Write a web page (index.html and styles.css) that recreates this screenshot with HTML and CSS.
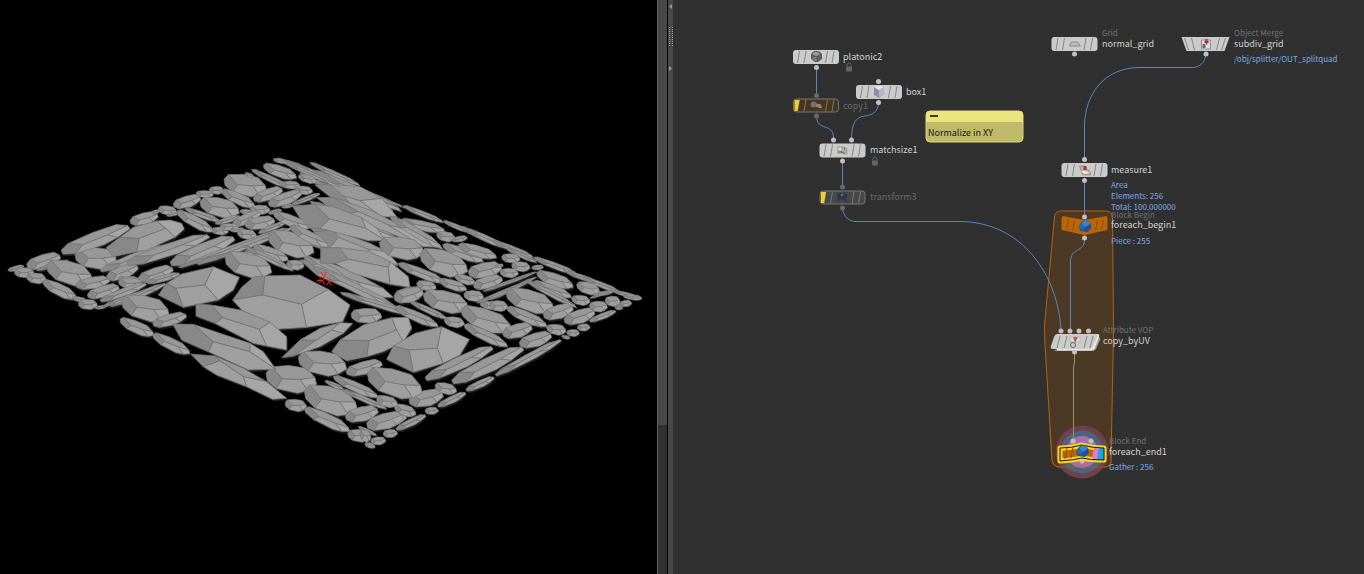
FILE: index.html
```html
<!DOCTYPE html>
<html lang="en">
<head>
<meta charset="utf-8">
<title>Scene and network editor</title>
<link rel="stylesheet" href="styles.css">
</head>
<body>
<main class="workspace">
  <section class="viewport" aria-label="Scene view">
    <svg class="scene" viewBox="0 0 657 574" preserveAspectRatio="xMinYMin meet">
      <g id="shadows"></g>
      <g id="stones"></g>
      <g class="axis">
        <path d="M317 280.500h6M320 277.500v6M323 281l1 3h1"/>
        <text x="321" y="278">y</text>
        <text x="326" y="285">x</text>
      </g>
    </svg>
  </section>
  <div class="scrollbar"><div class="thumb"></div></div>
  <div class="splitter">
    <svg viewBox="0 0 5 80" width="5" height="80">
      <path fill="#999" d="M4 4v5L1 6.500zM1 66v5l3-2.500z"/>
      <path stroke="#999" stroke-width="1" stroke-dasharray="1 1" d="M1.500 27v20M4.500 27v20"/>
    </svg>
  </div>
  <section class="network" aria-label="Network editor">
    <svg class="graph" viewBox="673 0 691 574" preserveAspectRatio="xMinYMin meet">
      <defs>
        <g id="slashes"><path d="M-18.500 6l2-12M-12 6l2-12M9.500 6l2-12M16 6l2-12"/></g>
        <g id="plate"><rect x="-23" y="-7" width="46" height="14" rx="3" fill="#cbcbcb"/><use href="#slashes" stroke="#858585"/></g>
        <g id="lock"><rect x="-3" y="-1" width="6" height="5" rx="1" fill="#5b6a68"/><path d="M-2-1v-1.500a2 2 0 0 1 4 0v1.500" fill="none" stroke="#5b6a68"/></g>
        <g id="blob"><path fill="#17549b" d="M-6 1l3-5 4-2 5 3 1 5-4 4-7-1z"/><path fill="#3d83d2" d="M-3-3l4-3 5 3-3 3-3 1z"/><path fill="#2767b3" d="M-6 1l3-4 3 4-1 4z"/></g>
      </defs>

      <path class="region" d="M1061 211H1105Q1112 211 1112.500 217L1113.500 330L1111 461Q1111 467 1104 467H1060Q1053 467 1052 460L1045 345L1044.500 325L1054.500 217Q1055 211 1061 211Z"/>
      <g>
        <circle cx="1082" cy="452" r="26.500" fill="#70404c"/>
        <circle cx="1082" cy="452" r="21.500" fill="#50637c"/>
        <circle cx="1082" cy="452" r="16" fill="#a66fad"/>
      </g>
      <path class="region edge" d="M1111.500 430L1111 461Q1111 467 1104 467H1060Q1053 467 1052 460L1050 430"/>

      <g class="wires">
        <path d="M816.500 68V95"/>
        <path d="M816.500 116C816.500 132 833.500 122 833.500 138"/>
        <path d="M878.500 103C878 112 872 115 865 116C855 117 852 124 851.500 138"/>
        <path d="M842.500 161V187"/>
        <path d="M842.500 209C844 217 849 221.500 856 221.500H960C1023 222 1058 276 1061 330"/>
        <path d="M1206 54C1205 62 1200 67.500 1193 67.500H1139C1104 68 1085 94 1084.500 126V159"/>
        <path d="M1084.500 181V216"/>
        <path d="M1084.500 239C1084.500 254 1070.500 246 1070.500 262V330"/>
        <path class="olive" d="M1074.500 352V362L1073.500 367V440"/>
      </g>

      <g class="ports">
        <circle cx="816.500" cy="67.500" r="2.500"/><circle cx="878.500" cy="81.500" r="2.500"/><circle cx="878.500" cy="102.500" r="2.500"/>
        <circle cx="833.500" cy="140" r="2.500"/><circle cx="851.500" cy="140" r="2.500"/><circle cx="842.500" cy="161" r="2.500"/>
        <circle cx="1074.500" cy="54" r="2.500"/><circle cx="1206" cy="54" r="2.500"/>
        <circle cx="1084.500" cy="159.500" r="2.500"/><circle cx="1084.500" cy="180.500" r="2.500"/><circle cx="1084.500" cy="217" r="2.500"/><circle cx="1084.500" cy="238" r="2.500"/>
        <circle cx="1061" cy="331" r="2.500"/><circle cx="1070" cy="331" r="2.500"/><circle cx="1079" cy="331" r="2.500"/><circle cx="1088.500" cy="331" r="2.500"/><circle cx="1074.500" cy="352" r="2.500"/>
        <circle cx="1073" cy="441" r="2.500"/><circle cx="1091" cy="441" r="2.500"/><circle cx="1082" cy="461" r="2.500"/>
        <g class="off"><circle cx="816.500" cy="95.500" r="2.500"/><circle cx="816.500" cy="116" r="2.500"/><circle cx="842.500" cy="187" r="2.500"/><circle cx="842.500" cy="208" r="2.500"/></g>
      </g>

      <g transform="translate(816 57)"><use href="#plate"/><path fill="#5c5c5c" d="M-5-3l3-3h5l3 3v5l-4 3h-3l-4-3z"/><path fill="#999" d="M-3-4l2-1h3l2 2-3 2-4-1z"/><path fill="#7a7a7a" d="M-3 0l3 0 1 3-2 1-3-2z"/></g>
      <g transform="translate(879 92)"><use href="#plate"/><path fill="#8793a3" d="M-5-5l5 3 5-3v7l-5 4-5-3z"/><path fill="#e4e8ee" d="M-5-5l5-1 5 1-5 3z"/><path fill="#aeb8c8" d="M0-2l5-3v7l-5 4z"/></g>
      <g transform="translate(816 105.500)"><rect x="-22.500" y="-6.500" width="45" height="13" rx="3" fill="#49341f" stroke="#777"/><use href="#slashes" stroke="#777"/><path fill="#ecd02c" d="M-21.500-5.500h5l-2 11h-3z"/><circle cx="-2.500" cy="-1" r="3" fill="#74706a"/><path fill="#8a857b" d="M0-2l5 1 1 3-2 1-4-2z"/></g>
      <g transform="translate(842.500 150.500)"><use href="#plate"/><rect x="-5" y="-4" width="6" height="7" fill="#88968a"/><path fill="#e1e8df" d="M-4-3h3v3h-3z"/><path fill="#a2b29a" d="M0-3h5v7h-4l-2-4z"/><path stroke="#50713f" d="M-2 1l4 2M2-3v2"/></g>
      <g transform="translate(842.500 197.500)"><rect x="-22.500" y="-6.500" width="45" height="13" rx="3" fill="#474747" stroke="#777"/><use href="#slashes" stroke="#777"/><path fill="#ecd02c" d="M-21.500-5.500h5l-2 11h-3z"/><path fill="#26384c" d="M-5-3l3-2 3 2 3-1 1 3-2 2 2 3-4-1-2-2-4 3z"/><path fill="#5d7185" d="M-2-3l2-1 1 2-2 1z"/></g>
      <use href="#lock" x="849" y="67.500"/><use href="#lock" x="875" y="161.500"/>
      <g transform="translate(1074.500 44)"><use href="#plate"/><path fill="#b8bdc3" stroke="#858c94" d="M-5 2l2-4h6l3 4z"/></g>
      <g transform="translate(1205.500 44)"><path fill="#cbcbcb" d="M-24-7H24L19 7H-19z"/><path stroke="#858585" d="M-17 6l-4-12M-11 6l-3-12M11 6l3-12M16 6l4-12"/><path fill="#d8dde0" stroke="#88939b" d="M-4-4h9v9h-9z"/><path fill="#5d6f7b" d="M-3 0h3v4h-3z"/><path fill="#ca2222" d="M0-5h2v2h1v2h-1l-1 2-1-2h-1v-2h1z"/></g>
      <g transform="translate(1084.500 170)"><use href="#plate"/><path fill="#b9b09b" stroke="#777062" stroke-width=".5" d="M-5-4h4l7 6v3h-8z"/><path fill="#bf2534" d="M-1-4h3v4h-3z"/><path fill="#f1ead6" d="M-4 1l5 0 4 2-5 1z"/></g>
      <g transform="translate(1084.500 225)"><path fill="#bd6500" d="M-22-9L0-5 22-9 23-7V5L0 10-23 5v-12z"/><path stroke="#805021" d="M-18 5l2-11M-12 6l2-11M11 6l2-11M17 5l2-11"/><use href="#blob" y="1"/></g>
      <g transform="translate(1075 342)"><path fill="#9c9c9c" d="M-17-5H23Q26-5 25-2L21 7Q20 9 17 9H-18z"/><path fill="#e5e5e5" d="M22-8Q25-8 24-5L20 6Q19 8.500 16 8.500H-21z"/><path fill="#cbcbcb" d="M-18-8H20Q23-8 22-5L18 4Q17 7 14 7H-22Q-25 7-24 4L-21-5Q-20-8-18-8z"/><path stroke="#858585" d="M-18 6l3-12M-11 6l3-12M9 6l3-12M15 6l3-12"/><path fill="#ddd" stroke="#999" stroke-width=".5" d="M-5-5H5v5H-5z"/><path fill="#b95c46" d="M-2-5h5L0 1z"/><circle cx="-2" cy="3" r="2.500" fill="none" stroke="#696969"/></g>
      <g transform="translate(1082 453)"><path fill="#bd6500" stroke="#ffd51c" stroke-width="5" stroke-linejoin="round" d="M-22-5Q-10-5 0-8 10-5 22-5V7Q8 7 0 5-8 7-22 8z"/><path fill="#e07bd0" d="M12-6l5 1-2 12-5-1z"/><path fill="#12a8e8" d="M17-5h5V7h-7z"/><path fill="none" stroke="#151515" stroke-width="1" d="M-22-5Q-10-5 0-8 10-5 22-5V7Q8 7 0 5-8 7-22 8z"/><path stroke="#805021" d="M-17 6l2-11M-11 5l2-11"/><use href="#blob" y="-2"/></g>

      <g class="note">
        <rect x="926" y="111" width="97" height="31" rx="4" fill="#bfb96a" stroke="#ded770"/>
        <path fill="#ebe47c" d="M926 122v-7q0-4 4-4h89q4 0 4 4v7z"/>
        <rect x="930" y="115" width="8" height="2" fill="#3b3920"/>
        <text x="928" y="136">Normalize in XY</text>
      </g>

      <g class="name">
        <text x="843" y="60">platonic2</text><text x="906" y="95">box1</text>
        <text class="dim" x="843" y="109">copy1</text><text x="870" y="153">matchsize1</text><text class="dim" x="870" y="200">transform3</text>
        <text x="1102" y="47">normal_grid</text><text x="1234" y="47">subdiv_grid</text>
        <text x="1111" y="173">measure1</text><text x="1111" y="228">foreach_begin1</text><text x="1103" y="344">copy_byUV</text><text x="1109" y="455">foreach_end1</text>
      </g>
      <g class="kind">
        <text x="1102" y="36">Grid</text><text x="1234" y="36">Object Merge</text><text x="1111" y="218">Block Begin</text><text x="1103" y="333">Attribute VOP</text><text x="1109" y="444">Block End</text>
      </g>
      <g class="info">
        <text x="1234" y="62">/obj/splitter/OUT_splitquad</text><text x="1111" y="188">Area</text><text x="1111" y="199">Elements: 256</text><text x="1111" y="210">Total: 100.000000</text><text x="1111" y="244">Piece : 255</text><text x="1109" y="470">Gather : 256</text>
      </g>
    </svg>
  </section>
</main>
<script src="stones.js"></script>
</body>
</html>
```
FILE: styles.css
```css
body { margin: 0; background: #303030; font-family: "Noto Sans CJK SC", "Noto Sans", sans-serif; }
.workspace { display: flex; height: 100vh; overflow: hidden; background: #000; }
.viewport { flex: 657 1 0; min-width: 0; background: #000; }
.scene { display: block; width: 100%; }
.scrollbar { flex: none; box-sizing: border-box; width: 10px; background: #303030; border-left: 1px solid #606060; }
.thumb { height: 74%; background: #484848; }
.splitter { flex: none; width: 5px; margin-left: 1px; background: #484848; }
.splitter svg { display: block; }
.network { flex: 691 1 0; min-width: 0; background: #303030; }
.graph { display: block; width: 100%; }
.axis path { fill: none; stroke: #ff1c1c; }
.axis text { font-size: 11px; fill: #ff1c1c; }
.facet { stroke: #757575; stroke-linejoin: round; }
.under { fill: #1b1b1b; }
.region { fill: #4b3926; stroke: #b96107; }
.region.edge { fill: none; stroke-opacity: .6; }
.wires path { fill: none; stroke: #5686c4; }
.wires .olive { stroke: #8b9b5c; }
.ports circle { fill: #c0c0c0; }
.ports .off circle { fill: #686868; }
.name { font-size: 9px; fill: #d0d0d0; }
.name .dim { fill: #686868; }
.kind { font-size: 8px; fill: #707070; }
.info { font-size: 8px; fill: #7caae8; }
.note text { font-size: 9px; fill: #17170f; }
```
FILE: stones.js
```js
// Stones are measured on a grid of thirds of a pixel, in patches with an origin of their own.
// Short rows: left x, left y, right x, right y, thickness.
const patches = [
  { x: 310, y: 160, rows: `
-95 -4 285 142 12;-70 4 250 150 20;10 35 275 150 26;0 10 150 75 16;0 60 250 170 22;40 130 400 262 30;0 130 270 240 30;
-10 250 265 313 20;0 205 250 300 26`,
    large: [
      ['15,75 60,73 150,80 215,115 262,172 215,170 130,140 60,110', '100,108', '150,122', [1, 3, 5, 6]],
      ['20,113 70,112 180,150 300,210 395,262 340,260 230,215 90,165', '145,155', '235,195', [1, 3, 5, 7]],
      ['10,215 70,210 180,250 230,275 265,313 200,308 120,290 60,262', '85,232', '175,268', [1, 3, 5, 7]],
      ['-30,300 30,297 130,335 220,385 250,412 190,412 90,375 20,345', '40,325', '140,365', [1, 3, 5, 7]]] },
  { x: 200, y: 150, rows: `
230 28 300 50 10;240 32 420 110 14;300 70 350 95 12;
310 322 440 385 26`,
    large: [
      ['277,168 345,163 400,170 485,203 530,235 557,272 505,272 360,235 325,235 300,205', '388,207', '498,235', [1, 3, 5, 7]]] },
  { x: 320, y: 150, rows: `
-20 355 235 475 28;60 430 300 500 18;
250 170 370 215 16;370 215 450 245 14;420 232 540 285 16;440 240 560 292 18;520 275 640 320 16;560 298 650 335 14;
640 325 770 370 18;740 368 830 395 14;790 385 900 425 16;880 425 950 440 12;
240 215 375 240 28;210 205 365 290 30;350 258 405 262 28;395 272 442 262 16;
178 290 312 300 62;300 325 443 352 72;368 290 490 330 32;415 290 530 318 32;
445 372 545 350 44;235 345 375 395 28;290 405 348 410 28;222 445 310 425 44;
358 395 440 415 28;405 383 465 395 26;460 410 548 385 36;432 438 490 438 28;
545 325 600 325 26;575 350 630 350 28;540 370 595 368 26;635 355 670 350 14;525 350 550 345 10;
510 450 650 380 12;470 460 610 400 12;490 425 650 365 10;480 465 560 470 24;650 375 760 405 38;640 400 755 438 28;620 395 770 470 18;
775 410 838 418 32;820 435 880 425 12;810 470 860 468 28;860 455 900 455 28;910 440 965 443 14;890 470 930 455 14`,
    large: [
      ['2,293 58,293 150,305 210,335 265,380 270,412 210,403 100,370 45,340 2,340', '85,328', '205,352', [1, 3, 6, 8]]] },
  { x: 0, y: 150, rows: `
820 30 860 36 12;24 362 72 348 14;43 370 102 366 28;80 385 138 385 30;80 350 182 318 40;110 362 205 330 12;
140 358 277 380 66;225 325 350 325 60;128 400 230 440 36;228 410 330 388 34;215 445 262 452 14;235 465 292 462 28;
262 440 358 410 34;285 475 320 468 10;183 310 390 228 46;390 218 475 195 34;455 188 480 182 10;475 180 530 183 26;
500 198 545 185 10;520 168 602 143 34;588 133 640 132 20;628 122 672 120 22;672 100 800 112 60;600 165 718 180 54;
665 128 765 165 34;735 72 762 80 12;755 62 870 112 18;790 52 890 78 34;845 105 900 105 22;895 82 950 92 22;
885 120 938 122 24;760 150 848 118 34;805 165 905 128 36;875 165 960 130 14;555 178 660 212 18;530 190 640 240 34;
645 222 720 198 16;720 185 755 186 14;750 180 810 178 26;805 190 845 180 12;845 172 880 165 10;698 225 782 188 32;
735 228 825 210 36;635 243 685 243 22;660 232 715 230 20;690 242 735 238 12;712 252 770 255 28;775 250 860 215 16;
820 195 925 230 34;300 365 500 285 28;320 385 415 350 38;380 345 630 255 38;510 345 705 262 46;535 355 860 232 16;
590 345 880 232 20;415 390 520 355 38;355 385 415 385 12;355 400 430 400 30;440 400 540 370 18;300 455 440 400 24;
330 470 500 400 18;310 470 430 425 14;675 335 815 355 70;805 270 942 295 70;760 295 865 325 34;735 305 770 312 12;
730 290 880 360 18;860 345 912 345 28;870 235 985 285 34`,
    large: [
      ['318,293 360,262 400,232 470,213 510,210 545,220 553,237 525,262 440,300 410,305 340,320', '418,265', '498,235', [1, 3, 7, 9]],
      ['475,435 500,400 545,372 640,350 718,382 700,420 655,450 550,472', '528,415', '615,405', [1, 3, 6, 7]],
      ['698,450 725,412 762,380 795,378 900,375 985,418 1050,465 1028,515 920,532 830,538 725,480', '788,435', '905,463', [3, 5, 8, 0]]] },
  { x: 120, y: 290, rows: `
5 45 148 65 70;0 95 102 130 36;98 105 200 75 34;98 140 210 185 36;438 265 590 270 76;495 345 560 347 34;
553 318 712 345 78;553 362 690 418 38;535 215 680 225 68;678 250 787 218 38;693 80 785 75 42;
640 265 775 318 30;615 275 670 295 14;665 300 800 355 16;770 335 832 337 30;676 385 775 360 42;
683 437 752 437 36;735 463 765 468 14;755 455 797 450 20;790 435 832 428 20;715 412 770 435 12;742 408 860 378 40`,
    large: [
      ['228,42 275,45 362,60 450,97 500,140 500,180 440,168 400,160 285,100 228,78', '308,83', '418,118', [1, 3, 6, 8]],
      ['158,102 220,103 390,160 430,185 468,238 385,240 265,185 185,150', '280,155', '390,185', [1, 2, 4, 6]],
      ['212,192 285,198 370,235 440,275 500,325 458,328 380,290 290,255 250,230', '300,212', '370,260', [1, 3, 6, 8]],
      ['485,203 540,150 600,115 660,98 698,100 670,130 600,170 520,198', '590,150', '635,120', [1, 3, 5, 7]],
      ['635,185 660,150 730,105 815,83 865,82 875,115 850,155 790,185 740,200 680,212', '748,152', '830,120', [1, 3, 6, 8]]] },
  { x: 360, y: 270, rows: `
105 115 235 165 30;150 97 262 145 18;172 45 228 50 26;103 88 190 65 40;190 85 325 105 60;312 78 370 78 30;
195 330 400 230 40;275 340 492 232 46;405 318 605 208 24;318 362 403 322 22;233 410 318 368 22;108 480 198 435 22;
70 493 112 488 22;32 515 76 510 22;15 525 45 530 12;195 425 235 420 20;103 415 168 428 32;147 398 250 372 46;
225 352 290 360 32;20 470 130 438 46;0 495 32 500 34;50 388 112 400 30;22 325 187 355 78;
303 130 455 170 62;312 170 443 225 32;428 195 517 170 40;478 225 575 195 40;440 118 562 165 32;390 108 443 108 30;
438 78 582 108 62;253 155 313 158 30;550 140 640 112 40;612 155 705 125 40;560 178 618 180 30;605 200 630 203 10;
620 190 658 188 20;652 175 690 170 20;688 155 768 122 18;635 90 690 92 28;688 112 742 108 30;735 95 780 92 28;
765 115 788 113 10;780 103 815 98 18;810 85 845 84 12;650 50 718 60 34;690 85 760 60 8`,
    large: [
      ['80,268 100,228 165,190 245,170 328,208 300,255 250,280 160,307', '148,240', '232,235', [1, 3, 6, 7]]] }
];

const round = [[-1, -.4], [-.8, -.92], [-.1, -1.08], [.6, -.9], [.93, -.2], [1, .35], [.65, .85], [.25, 1.1], [-.6, .78], [-.95, .2]];
const shades = { left: '#888888', top: '#989898', right: '#a6a6a6', bottom: '#9f9f9f' };
const layer = document.getElementById('stones');
const shadows = document.getElementById('shadows');

function polygon(parent, points, className, fill, line) {
  const node = document.createElementNS('http://www.w3.org/2000/svg', 'polygon');
  node.setAttribute('points', points.map(p => p.join(',')).join(' '));
  node.setAttribute('class', className);
  if (fill) node.setAttribute('fill', fill);
  if (line) node.setAttribute('stroke-width', line);
  parent.append(node);
}

function arc(points, from, to) {
  const out = [points[from]];
  for (let i = from; i !== to;) { i = (i + 1) % points.length; out.push(points[i]); }
  return out;
}

function stone(points, a, b, [i, j, k, l], line) {
  polygon(shadows, points.map(([x, y]) => [x + 1, y + (line > .6 ? 2 : 1)]), 'under');
  polygon(layer, [...arc(points, l, i), a], 'facet', shades.left, line);
  polygon(layer, [...arc(points, i, j), b, a], 'facet', shades.top, line);
  polygon(layer, [...arc(points, k, l), a, b], 'facet', shades.bottom, line);
  polygon(layer, [...arc(points, j, k), b], 'facet', shades.right, line);
}

for (const patch of patches) {
  const place = ([x, y]) => [patch.x + x / 3, patch.y + y / 3];
  for (const row of patch.rows.split(';')) {
    const [x1, y1, x2, y2, thick] = row.trim().split(' ').map(Number);
    const w = (x2 - x1) / 2, dy = (y2 - y1) / 2;
    const at = ([x, y]) => place([x1 + w + x * w, y1 + dy + x * dy + y * thick / 2]);
    stone(round.map(at), at([-.35, 0]), at([.35, 0]), [1, 4, 6, 8], w > 40 ? .7 : .5);
  }
  for (const [outline, a, b, joints] of patch.large) {
    const read = s => place(s.split(',').map(Number));
    stone(outline.split(' ').map(read), read(a), read(b), joints, .8);
  }
}
```
